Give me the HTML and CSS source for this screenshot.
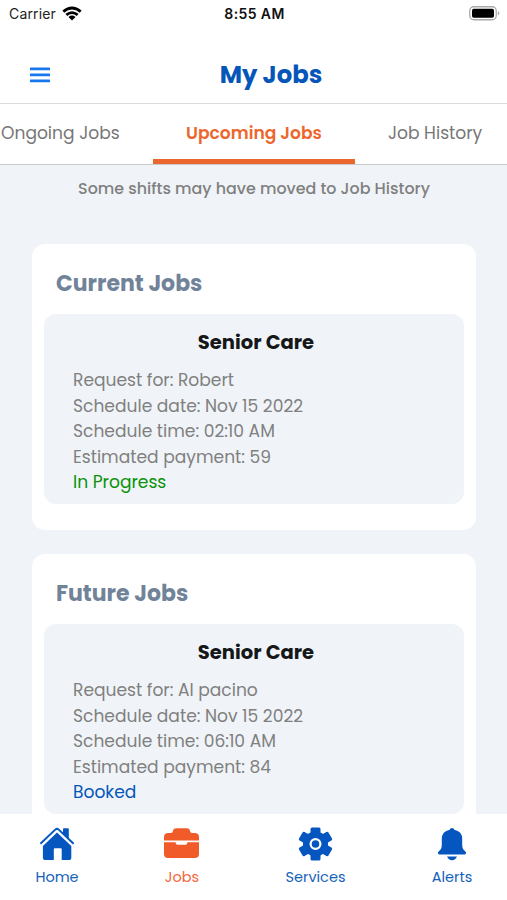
FILE: index.html
```html
<!DOCTYPE html>
<html lang="en">
<head>
<meta charset="utf-8">
<title>My Jobs</title>
<link rel="stylesheet" href="styles.css">
</head>
<body>
<div class="app">
  <div class="status">
    <div class="status-left">
      <span class="carrier">Carrier</span>
      <svg width="20" height="16" viewBox="0 0 20 16" fill="none" stroke="#000" stroke-width="2.7"><path d="M1.300 5.600Q10-1.600 18.700 5.600"/><path d="M4.300 8.900Q10 4.200 15.700 8.900"/><path d="M6.500 11Q10 8.200 13.500 11L10 14.500Z" fill="#000" stroke="none"/></svg>
    </div>
    <span class="clock">8:55 AM</span>
    <svg class="battery" width="31" height="15" viewBox="0 0 31 15"><rect x=".75" y=".75" width="26.5" height="13" rx="4" fill="#fff" stroke="#aaa" stroke-width="1.3"/><rect x="3" y="2.8" width="22" height="9" rx="1.8"/><path d="M28.800 5q3 2.200 0 4.600z" fill="#aaa"/></svg>
  </div>
  <header class="header">
    <svg class="menu" width="20" height="16" viewBox="0 0 20 16" fill="#1677ee"><rect y=".5" width="20" height="2.8" rx=".6"/><rect y="6.5" width="20" height="2.8" rx=".6"/><rect y="12.5" width="20" height="2.8" rx=".6"/></svg>
    <h1 class="title">My Jobs</h1>
  </header>
  <nav class="tabs">
    <div class="tab tab-first"><span>Ongoing Jobs</span></div>
    <div class="tab tab-active"><span>Upcoming Jobs</span></div>
    <div class="tab tab-last"><span>Job History</span></div>
  </nav>
  <main class="content">
    <p class="note">Some shifts may have moved to Job History</p>
    <section class="card">
      <h2 class="card-title">Current Jobs</h2>
      <article class="job">
        <h3 class="job-title">Senior Care</h3>
        <p class="line">Request for: Robert</p>
        <p class="line">Schedule date: Nov 15 2022</p>
        <p class="line">Schedule time: 02:10 AM</p>
        <p class="line">Estimated payment: 59</p>
        <p class="line progress">In Progress</p>
      </article>
    </section>
    <section class="card">
      <h2 class="card-title">Future Jobs</h2>
      <article class="job">
        <h3 class="job-title">Senior Care</h3>
        <p class="line">Request for: Al pacino</p>
        <p class="line">Schedule date: Nov 15 2022</p>
        <p class="line">Schedule time: 06:10 AM</p>
        <p class="line">Estimated payment: 84</p>
        <p class="line booked">Booked</p>
      </article>
    </section>
  </main>
  <nav class="bottom">
    <div class="item home">
      <svg width="36" height="36" viewBox="0 0 36 36" fill="#0556bf"><path d="M24 3.200q0-.9.900-.9h4q.9 0 .9.900V13.500L24 8.300z"/><path d="M1.400 17.800 16.500 3.400q1.500-1.300 3 0l15.100 14.400" fill="none" stroke="#0556bf" stroke-width="2"/><path d="M18 6.500 32.300 20V32q0 2-2 2h-7.600V23.200q0-1-1-1h-5.900q-1 0-1 1V34H5.900q-2 0-2-2V20z"/></svg>
      <span>Home</span>
    </div>
    <div class="item jobs">
      <svg width="36" height="36" viewBox="0 0 36 36" fill="#f15a29"><path d="M0 14.600V11q0-3.600 3.500-4h3.200q1.800 0 2.100-1.600.6-3.200 3.400-3.200h10.600q2.800 0 3.400 3.200.3 1.600 2.100 1.600h3.200q3.500.4 3.500 4v3.600z"/><path d="M0 16.200h11.700v.8q0 1.700 1.700 1.700h8.200q1.700 0 1.700-1.700v-.8H35v11.900q0 4-4 4H4q-4 0-4-4z"/></svg>
      <span>Jobs</span>
    </div>
    <div class="item services">
      <svg width="36" height="36" viewBox="0 0 36 36" fill="#0556bf"><circle cx="17.500" cy="18" r="12.500"/><rect x="12.500" y="1.500" width="10" height="33" rx="1.500"/><rect x="12.500" y="1" width="10" height="34" rx="1.500" transform="rotate(60 17.500 18)"/><rect x="12.500" y="1" width="10" height="34" rx="1.500" transform="rotate(120 17.500 18)"/><circle cx="17.500" cy="18" r="4.900" fill="none" stroke="#fff" stroke-width="2.200"/></svg>
      <span>Services</span>
    </div>
    <div class="item alerts">
      <svg width="36" height="36" viewBox="0 0 36 36" fill="#0556bf"><path d="M15.700 3.700q.3-1.700 2.300-1.700t2.300 1.700Q28.200 5.200 28.200 13v6q0 4 3.200 6.600 1 1 .6 2-.4 1-1.600 1H5.600q-1.200 0-1.600-1-.4-1 .6-2Q7.800 23 7.800 19V13Q7.800 5.200 15.700 3.700z"/><path d="M13 30.500h10Q21.500 34.200 18 34.200T13 30.500z"/></svg>
      <span>Alerts</span>
    </div>
  </nav>
</div>
</body>
</html>
```
FILE: styles.css
```css
* { box-sizing: border-box; }
body { margin: 0; background: #fff; font-family: Poppins, Inter, "Open Sans", sans-serif; color: #808080; }
h1, h2, h3, p { margin: 0; white-space: nowrap; }
svg { display: block; flex-shrink: 0; }
.app { width: 507px; height: 900px; display: flex; flex-direction: column; overflow: hidden; }
.status { flex: 0 0 28px; display: grid; grid-template-columns: 1fr auto 1fr; align-items: center; padding: 0 7px 1px 9px; color: #222; font-family: Inter, sans-serif; font-size: 14px; }
.status-left { display: flex; align-items: center; gap: 6px; }
.carrier { letter-spacing: .15px; }
.clock { font-weight: 600; letter-spacing: .4px; color: #111; }
.battery { justify-self: end; }
.header { flex: 0 0 76px; display: grid; grid-template-columns: 90px 1fr 90px; align-items: center; padding-top: 18px; border-bottom: 1px solid #dcdcdc; }
.menu { margin-left: 30px; }
.title { text-align: center; font-size: 24.300px; line-height: 36px; font-weight: 700; color: #0556b8; padding-left: 35px; }
.tabs { flex: 0 0 61px; display: grid; grid-template-columns: 153px 202px 152px; border-bottom: 1px solid #c8cacc; font-size: 17.100px; line-height: 24px; color: #777; white-space: nowrap; }
.tab { padding-top: 17px; }
.tab-first { padding-left: 1px; }
.tab-active { text-align: center; color: #eb672d; font-weight: 600; border-bottom: 5px solid #eb672d; }
.tab-last { padding-left: 33px; }
.content { flex: 1; min-height: 0; overflow: hidden; background: #f0f4f8; padding: 0 31px 0 32px; }
.note { padding-top: 12px; height: 79px; text-align: center; line-height: 24px; font-size: 15.900px; font-weight: 500; }
.card { height: 286px; margin-bottom: 24px; padding: 24px 12px 0; border-radius: 13px; background: #fff; }
.card-title { height: 46px; padding-left: 12px; font-size: 22px; line-height: 32px; font-weight: 700; color: #708399; }
.job { height: 190px; padding: 13px 29px 0; border-radius: 12px; background: #f0f4f8; }
.job-title { height: 41px; padding-left: 4px; text-align: center; font-size: 19.500px; line-height: 32px; font-weight: 700; color: #151719; }
.line { font-size: 17.100px; line-height: 25.600px; }
.progress { color: #0a920a; }
.booked { color: #0556b8; }
.bottom { flex: 0 0 86px; display: grid; grid-template-columns: 114px 136px 131px 126px; background: #fff; padding-top: 12px; }
.item { display: flex; flex-direction: column; align-items: center; gap: 3px; font-size: 14.500px; line-height: 24px; color: #1562b9; }
.jobs { color: #f1683e; }
.alerts { padding-left: 16px; }
```
